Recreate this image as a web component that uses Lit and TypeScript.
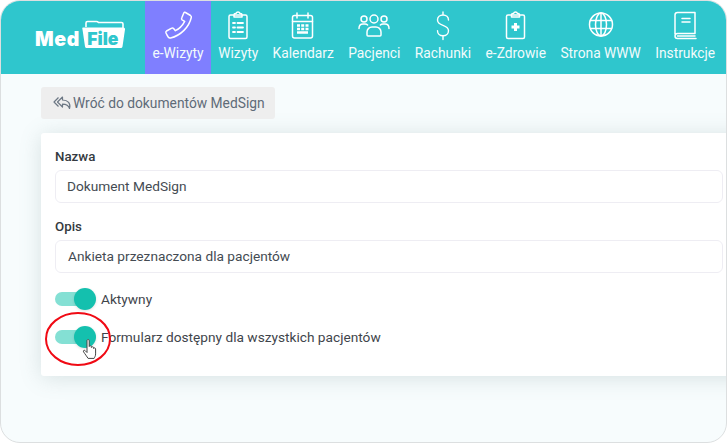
import { LitElement, html, css, svg } from "lit";
import { customElement } from "lit/decorators.js";

const ic = (body: unknown, w = 32) => html`<svg class="ic" width=${w} height="32" viewBox="0 0 32 32" fill="none" stroke="#fff" stroke-width="1.5" stroke-linecap="round" stroke-linejoin="round">${body}</svg>`;

const items = [
  { label: "e-Wizyty", active: true, icon: svg`<path d="M23.500 2.500l5 3c.7.5 1 1.200.8 2C27 17 19 25.500 8.500 28c-.9.2-1.600 0-2.100-.7L5 25l-1-2c-.4-.8-.2-1.500.5-2l5.200-2.800c.7-.4 1.400-.3 1.900.3l1.800 2.200c4-2 7-5 9.300-9.400L20 9.800c-.6-.6-.6-1.300-.2-2l2-4.800c.3-.7 1-.9 1.700-.5z"/>` },
  { label: "Wizyty", icon: svg`<rect x="7" y="5" width="18" height="23.500" rx="1.500"/><path d="M12 5c0-1 .7-1.500 1.500-1.500h.5C14.400 2.500 15 2 16 2s1.600.5 2 1.500h.5c.8 0 1.500.5 1.500 1.500v2h-8z"/><path d="M11 13h2M15.500 13H21M11 17.500h2M15.500 17.500H21M11 22h2M15.500 22H21" stroke-width="1.800"/>` },
  { label: "Kalendarz", icon: svg`<rect x="5.500" y="5.500" width="20" height="22.500" rx="2"/><path d="M5.500 11.500h20M10 3v5M21 3v5"/><path d="M10 15.500h3M14.200 15.500h3M18.500 15.500h3M10 19h3M14.200 19h3M18.500 19h3M10 22.500h11" stroke-width="2.400" stroke-linecap="butt"/>` },
  { label: "Pacjenci", icon: svg`<circle cx="16" cy="9" r="4"/><circle cx="6" cy="9" r="3"/><circle cx="26" cy="9" r="3"/><path d="M9 25v-3C9 19 11.500 17 14 17h4c2.500 0 5 2 5 5v3c0 .6-.4 1-1 1H10c-.6 0-1-.4-1-1zM1 18.500c0-3 2-4.500 4-4.500h2c1 0 2 .4 2.600 1M31 18.500c0-3-2-4.500-4-4.500h-2c-1 0-2 .4-2.600 1"/>` },
  { label: "Rachunki", icon: svg`<path d="M21.500 10c0-3-2.500-5-5.500-5s-5.500 2-5.500 5c0 3 2.500 4.300 5.500 5.300s5.500 2.500 5.500 5.500c0 3-2.500 5-5.500 5s-5.500-2-5.500-5M16 2v3M16 26v3.500" stroke-width="1.400"/>` },
  { label: "e-Zdrowie", icon: svg`<rect x="6.500" y="5" width="18" height="23.500" rx="1.500"/><path d="M11.500 5c0-1 .7-1.500 1.500-1.500h.5C13.900 2.500 14.500 2 15.500 2s1.600.5 2 1.500h.5c.8 0 1.500.5 1.500 1.500v2h-8z"/><path d="M14 13h3v2.500h2.500v3H17V21h-3v-2.500h-2.500v-3H14z" fill="#fff" stroke="none"/>` },
  { label: "Strona WWW", icon: svg`<circle cx="16" cy="14.500" r="11.500"/><ellipse cx="16" cy="14.500" rx="5.500" ry="11.500"/><path d="M5.500 10.500h21M5.500 18.500h21M16 3v23"/>` },
  { label: "Instrukcje", icon: svg`<path d="M6 24V5c0-1.500 1-2.500 2.500-2.500H26v21H8.500C7 23.500 6 24.500 6 26s1 2.500 2.500 2.500H27"/><path d="M8.500 26H26M13 8.500h8M13 12h8" stroke-width="1.500"/>` },
];

@customElement("app-root")
export class AppRoot extends LitElement {
  static styles = css`
    :host { display: block; width: 727px; height: 443px; background: #fff; font-family: Roboto, "Liberation Sans", sans-serif; }
    .frame { position: relative; box-sizing: border-box; width: 727px; height: 443px; border: 1px solid #dcdfe0; border-radius: 20px; overflow: hidden; background: #f7fcfd; }
    header { display: flex; height: 73px; background: #2fc6cd; color: #fff; }
    .logo { width: 144px; flex: none; display: flex; align-items: flex-start; box-sizing: border-box; padding: 19px 0 0 34px; }
    .med { font: 900 19.500px/24px Inter, sans-serif; letter-spacing: .6px; margin-top: 7px; }
    .folder { position: relative; margin-left: 2px; width: 45px; height: 30px; }
    .folder svg { display: block; }
    .file { position: absolute; left: 3px; top: 9px; width: 36px; text-align: center; font: 900 17.500px/20px Inter, sans-serif; color: #2fc6cd; }
    nav { display: flex; flex: none; }
    .item { display: flex; flex-direction: column; align-items: center; box-sizing: border-box; padding: 9px 7.200px 0; font-size: 13.800px; line-height: 16px; white-space: nowrap; color: #f2fbfc; }
    .item.active { background: #7f7fff; width: 66px; padding-left: 0; padding-right: 0; }
    .ic { display: block; margin-bottom: 3px; }
    main { padding: 13px 0 0 40px; }
    .back { display: inline-flex; align-items: center; height: 32px; padding: 0 10px 0 12px; background: #eeeeee; border-radius: 3px; color: #5f6b78; font-size: 13.800px; }
    .card { box-sizing: border-box; width: 720px; height: 243px; margin-top: 14px; padding: 16px 0 0 14px; background: #fff; border-radius: 3px; box-shadow: 0 2px 22px rgba(90, 120, 120, .2); }
    label { display: block; font-size: 13.300px; font-weight: 500; line-height: 16px; color: #343a40; }
    .input { box-sizing: border-box; width: 668px; height: 33px; margin: 5px 0 16px; padding: 0 11px; border: 1px solid #eeedf3; border-radius: 6px; font-size: 13.700px; line-height: 31px; color: #444b52; }
    .opis { padding-left: 12px; margin-bottom: 7px; }
    .row { display: flex; align-items: center; height: 38px; font-size: 13.700px; color: #3f454b; }
    .toggle { position: relative; width: 35px; height: 14px; margin-right: 11px; border-radius: 7px; background: #84e0d4; }
    .toggle::after { content: ""; position: absolute; right: -6px; top: -4px; width: 22px; height: 22px; border-radius: 50%; background: #14c0ae; box-shadow: 0 1px 3px rgba(0,0,0,.12); }
    .mark { position: absolute; left: 44px; top: 311px; pointer-events: none; }
  `;

  render() {
    return html`<div class="frame">
      <header>
        <div class="logo">
          <span class="med">Med</span>
          <div class="folder">
            <svg width="45" height="30" viewBox="0 0 45 30"><path d="M4 7V3c0-1 .6-1.500 1.500-1.500h9c1 0 1.500.4 2 1h23c1 0 1.500.6 1.500 1.500v4" fill="none" stroke="#fff" stroke-width="1.600"/><path d="M1 7.500h40c1.500 0 2.200.8 2 2l-2.500 17c-.2 1-1 1.500-2 1.500H5c-1 0-1.800-.5-2-1.500l-2.500-17C.3 8.300 0 7.500 1 7.500z" fill="#fff"/></svg>
            <span class="file">File</span>
          </div>
        </div>
        <nav>${items.map((i) => html`<div class="item ${i.active ? "active" : ""}">${ic(i.icon)}<span>${i.label}</span></div>`)}</nav>
      </header>
      <main>
        <div class="back">
          <svg width="20" height="16" viewBox="0 0 20 16" fill="none" stroke="#6c7784" stroke-width="1.200" stroke-linejoin="round"><path d="M5.500 2.500L1 7l4.500 4.500M9.500 2L4.500 7l5 5V9.200c3.500 0 6 .8 7 4.300 1.500-5-1.500-8.500-7-8.500z"/></svg>
          <span>Wróć do dokumentów MedSign</span>
        </div>
        <div class="card">
          <label>Nazwa</label>
          <div class="input">Dokument MedSign</div>
          <label>Opis</label>
          <div class="input opis">Ankieta przeznaczona dla pacjentów</div>
          <div class="row"><span class="toggle"></span>Aktywny</div>
          <div class="row"><span class="toggle"></span>Formularz dostępny dla wszystkich pacjentów</div>
        </div>
      </main>
      <svg class="mark" width="70" height="58" viewBox="0 0 70 58" fill="none">
        <ellipse cx="33" cy="27" rx="32" ry="26" stroke="#f00a14" stroke-width="2"/>
        <path d="M42 28.500c0-1.200 2.200-1.200 2.200 0v6c0-1 2.200-1 2.200.2v.8c0-1 2.200-1 2.200.2v.8c0-1 2-.8 2 .4v5c0 2-.8 3-1.500 4.500h-6c-1-1.500-3.500-5-4.500-6.500-.8-1.200.6-2.200 1.600-1.200l1.800 1.800z" fill="#fff" stroke="#444" stroke-width="1"/>
      </svg>
    </div>`;
  }
}
